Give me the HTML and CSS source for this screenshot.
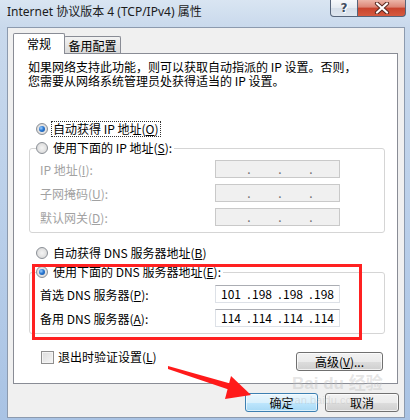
FILE: index.html
```html
<!DOCTYPE html>
<html lang="zh-CN">
<head>
<meta charset="utf-8">
<title>Internet 协议版本 4 (TCP/IPv4) 属性</title>
<link rel="stylesheet" href="styles.css">
</head>
<body>
<div class="window">
  <div class="titlebar">
    <span class="title">Internet 协议版本 4 (TCP/IPv4) 属性</span>
    <div class="caption-btns">
      <div class="cbtn help">?</div>
      <div class="cbtn close">
        <svg width="16" height="12" viewBox="0 0 16 12">
          <path d="M3 1.5 L13 10.5 M13 1.5 L3 10.5" stroke="#5a2a22" stroke-width="4.2" stroke-linecap="round"/>
          <path d="M3 1.5 L13 10.5 M13 1.5 L3 10.5" stroke="#ffffff" stroke-width="2.2" stroke-linecap="round"/>
        </svg>
      </div>
    </div>
  </div>
  <div class="client">
    <div class="tabs">
      <div class="tab active">常规</div>
      <div class="tab">备用配置</div>
    </div>
    <div class="panel">
      <p class="intro"><span class="line">如果网络支持此功能，则可以获取自动指派的 IP 设置。否则，</span><span class="line">您需要从网络系统管理员处获得适当的 IP 设置。</span></p>
      <div class="radio-row ip-auto"><span class="radio checked"></span><span class="focus">自动获得 IP 地址(<u>O</u>)</span></div>
      <fieldset class="group ip-group">
        <legend><span class="radio"></span><span>使用下面的 IP 地址(<u>S</u>):</span></legend>
        <div class="field disabled"><span class="lbl">IP 地址(<u>I</u>):</span><span class="ipbox"><span class="num"></span><span class="dot">.</span><span class="num"></span><span class="dot">.</span><span class="num"></span><span class="dot">.</span><span class="num"></span></span></div>
        <div class="field disabled"><span class="lbl">子网掩码(<u>U</u>):</span><span class="ipbox"><span class="num"></span><span class="dot">.</span><span class="num"></span><span class="dot">.</span><span class="num"></span><span class="dot">.</span><span class="num"></span></span></div>
        <div class="field disabled"><span class="lbl">默认网关(<u>D</u>):</span><span class="ipbox"><span class="num"></span><span class="dot">.</span><span class="num"></span><span class="dot">.</span><span class="num"></span><span class="dot">.</span><span class="num"></span></span></div>
      </fieldset>
      <div class="radio-row dns-auto"><span class="radio"></span><span>自动获得 DNS 服务器地址(<u>B</u>)</span></div>
      <fieldset class="group dns-group">
        <legend><span class="radio checked"></span><span>使用下面的 DNS 服务器地址(<u>E</u>):</span></legend>
        <div class="field"><span class="lbl">首选 DNS 服务器(<u>P</u>):</span><span class="ipbox"><span class="num">101</span><span class="dot">.</span><span class="num">198</span><span class="dot">.</span><span class="num">198</span><span class="dot">.</span><span class="num">198</span></span></div>
        <div class="field"><span class="lbl">备用 DNS 服务器(<u>A</u>):</span><span class="ipbox"><span class="num">114</span><span class="dot">.</span><span class="num">114</span><span class="dot">.</span><span class="num">114</span><span class="dot">.</span><span class="num">114</span></span></div>
      </fieldset>
      <div class="bottom-row">
        <div class="check-row"><span class="checkbox"></span><span>退出时验证设置(<u>L</u>)</span></div>
        <div class="btn adv">高级(<u>V</u>)...</div>
      </div>
    </div>
    <div class="dlg-buttons">
      <div class="btn ok">确定</div>
      <div class="btn cancel">取消</div>
    </div>
  </div>
  <div class="watermark">
    <span class="wm-big">Bai du 经验</span>
    <span class="wm-small">jingyan.baidu.com</span>
  </div>
  <div class="redbox"></div>
  <svg class="arrow" width="410" height="420" viewBox="0 0 410 420">
    <polygon points="168,366 232,384 230,390 168,369" fill="#ff1a1a"/>
    <polygon points="251,395 231,376 225,399" fill="#ff1a1a"/>
  </svg>
</div>
</body>
</html>
```

FILE: styles.css
```css
html, body {
  margin: 0;
  padding: 0;
}

body {
  width: 410px;
  height: 420px;
  overflow: hidden;
  font-family: "Noto Sans CJK SC", sans-serif;
  font-size: 12px;
  color: #000;
}

.window {
  position: relative;
  width: 410px;
  height: 420px;
  display: flex;
  flex-direction: column;
  background: linear-gradient(to bottom, #d9e5f2 0, #c9d9ec 27px, #bbd0ea 200px, #a9c3e4 420px);
}

/* ---------- title bar ---------- */
.titlebar {
  height: 27px;
  flex: none;
  display: flex;
  align-items: flex-start;
}

.title {
  padding: 5px 0 0 7px;
  line-height: 14px;
  font-family: "Noto Sans", "Noto Sans CJK SC", sans-serif;
  font-size: 12px;
  color: #1b1b1b;
}

.caption-btns {
  margin-left: auto;
  margin-right: 4px;
  display: flex;
}

.cbtn {
  height: 17px;
  box-sizing: border-box;
  border: 1px solid #56647a;
  border-top: none;
  display: flex;
  align-items: center;
  justify-content: center;
}

.help {
  width: 28px;
  border-radius: 0 0 0 4px;
  background: linear-gradient(#f6f8fb, #e4eaf1 50%, #d4dde8 51%, #dfe6ef);
  font-family: "DejaVu Sans", sans-serif;
  font-weight: bold;
  font-size: 12px;
  line-height: 12px;
  color: #3f4d61;
  text-shadow: 0 0 1px #fff, 1px 1px 0 #fff;
}

.close {
  width: 48px;
  border-left: none;
  border-radius: 0 0 4px 0;
  background: linear-gradient(#ecb5a8, #dc8474 45%, #c8432d 50%, #d65a3f);
}

/* ---------- client area ---------- */
.client {
  flex: 1;
  margin: 0 5px 2px 7px;
  border: 1px solid #8c9aae;
  background: #f0f0f0;
  padding: 5px 5px 0 5px;
  display: flex;
  flex-direction: column;
}

.tabs {
  height: 20px;
  display: flex;
  align-items: flex-end;
}

.tab {
  box-sizing: border-box;
  height: 17px;
  width: 57px;
  margin-left: -1px;
  border: 1px solid #898c95;
  border-bottom: none;
  border-radius: 2px 2px 0 0;
  background: linear-gradient(#f3f3f3, #e6e6e6 50%, #dadada);
  text-align: center;
  line-height: 17px;
}

.tab.active {
  position: relative;
  z-index: 1;
  margin-left: 0;
  height: 21px;
  width: 52px;
  margin-bottom: -1px;
  background: #fff;
  line-height: 20px;
}

.panel {
  box-sizing: border-box;
  width: 385px;
  height: 331px;
  border: 1px solid #898c95;
  background: #fff;
  display: flex;
  flex-direction: column;
}

.intro {
  margin: 6px 0 0 14px;
  display: flex;
  flex-direction: column;
  white-space: nowrap;
}

.intro .line {
  height: 14px;
  line-height: 14px;
}

.radio-row {
  height: 16px;
  display: flex;
  align-items: center;
  gap: 5px;
  padding-left: 22px;
  line-height: 16px;
}

.ip-auto {
  margin-top: 33px;
}

.dns-auto {
  margin-top: 12px;
}

.focus {
  outline: 1px dotted #333;
  outline-offset: -1px;
  padding: 0 2px;
  margin-left: -2px;
}

.radio {
  box-sizing: border-box;
  width: 12px;
  height: 12px;
  border-radius: 50%;
  border: 1px solid #8a8f96;
  background: radial-gradient(circle at 50% 50%, #f4f4f4 0, #e2e2e2 55%, #cfcfcf 100%);
  flex: none;
  display: inline-block;
  position: relative;
}

.radio.checked::after {
  content: "";
  position: absolute;
  left: 2px;
  top: 2px;
  width: 6px;
  height: 6px;
  border-radius: 50%;
  background: radial-gradient(circle at 35% 35%, #9fd0ff 0, #2a78d2 45%, #134f9c 100%);
}

.group {
  margin: 3px 0 0 15px;
  width: 356px;
  box-sizing: border-box;
  border: 1px solid #d5d5d5;
  border-radius: 3px;
  padding: 4px 0 6px 0;
}

.dns-group {
  padding-top: 5px;
}

.group legend {
  margin-left: 6px;
  padding: 0 2px 0 0;
  height: 16px;
  line-height: 16px;
  display: flex;
  align-items: center;
  gap: 5px;
}

.field {
  height: 18px;
  display: flex;
  align-items: center;
  padding-left: 10px;
}

.field + .field {
  margin-top: 6px;
}

.lbl {
  width: 175px;
  flex: none;
}

.field.disabled .lbl {
  color: #a2a2a2;
}

.ipbox {
  box-sizing: border-box;
  width: 125px;
  height: 18px;
  display: flex;
  align-items: center;
  padding-left: 5px;
  border: 1px solid #dde1e7;
  border-top-color: #abadb3;
  background: #fff;
  font-size: 12px;
  line-height: 16px;
}

.field.disabled .ipbox {
  background: #f0f0f0;
  border-color: #c9c9c9;
  color: #6d6d6d;
}

.num {
  box-sizing: border-box;
  width: 25px;
  padding-right: 5px;
  text-align: center;
}

.dot {
  width: 6px;
  text-align: center;
}

.bottom-row {
  margin-top: 18px;
  height: 19px;
  display: flex;
  align-items: flex-start;
  padding-left: 27px;
  padding-right: 14px;
}

.check-row {
  display: flex;
  align-items: center;
  gap: 4px;
  height: 14px;
  margin-top: -2px;
  line-height: 14px;
}

.checkbox {
  box-sizing: border-box;
  width: 13px;
  height: 13px;
  border: 1px solid #8f8f8f;
  background: linear-gradient(135deg, #dcdcdc, #f6f6f6);
  box-shadow: inset 0 0 0 1px #f4f4f4;
}

.btn {
  box-sizing: border-box;
  height: 19px;
  border: 1px solid #707070;
  border-radius: 3px;
  background: linear-gradient(#f2f2f2 0%, #ebebeb 50%, #dddddd 51%, #cfcfcf 100%);
  box-shadow: inset 0 0 0 1px rgba(255, 255, 255, 0.7);
  display: flex;
  align-items: center;
  justify-content: center;
  line-height: 17px;
}

.adv {
  margin-left: auto;
  width: 87px;
}

.dlg-buttons {
  margin-top: 9px;
  display: flex;
  justify-content: flex-end;
  gap: 7px;
}

.ok {
  width: 73px;
  border-color: #3c7fb1;
  background: linear-gradient(#eaf6fd 0%, #d9f0fc 50%, #bee6fd 51%, #a7d9f5 100%);
  box-shadow: inset 0 0 0 1px rgba(255, 255, 255, 0.6);
}

.cancel {
  width: 74px;
}

/* ---------- annotations ---------- */
.redbox {
  position: absolute;
  left: 32px;
  top: 264px;
  width: 330px;
  height: 76px;
  box-sizing: border-box;
  border: 3px solid #ff2121;
  pointer-events: none;
}

.arrow {
  position: absolute;
  left: 0;
  top: 0;
  pointer-events: none;
}

.watermark {
  position: absolute;
  left: 292px;
  top: 374px;
  display: flex;
  flex-direction: column;
  align-items: flex-start;
  color: rgba(190, 190, 190, 0.4);
  pointer-events: none;
}

.wm-big {
  font-family: "Liberation Sans", "Noto Sans CJK SC", sans-serif;
  font-weight: bold;
  font-size: 17px;
  line-height: 20px;
}

.wm-small {
  margin-left: -20px;
  font-family: "Liberation Sans", sans-serif;
  font-size: 11px;
  line-height: 12px;
}
```
